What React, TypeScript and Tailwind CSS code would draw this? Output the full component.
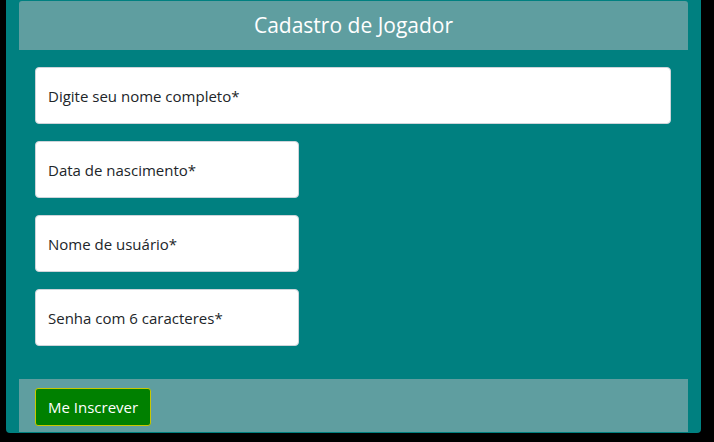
const fields = [
  { label: "Digite seu nome completo*", wide: true },
  { label: "Data de nascimento*", wide: false },
  { label: "Nome de usuário*", wide: false },
  { label: "Senha com 6 caracteres*", wide: false },
];

export default function App() {
  return (
    <div className="h-[442px] w-[714px] bg-black pl-[6px] font-['Open_Sans',sans-serif]">
      <div className="flex h-[433px] w-[695px] flex-col rounded-b-[4px] bg-[#008080] px-[13px]">
        <div className="mt-[1px] flex h-[49px] items-center justify-center rounded-t-[3px] bg-[#5f9ea0]">
          <h1 className="text-[21px] text-white">Cadastro de Jogador</h1>
        </div>

        <div className="flex flex-1 flex-col gap-[17px] px-[16px] pt-[17px]">
          {fields.map((f) => (
            <input
              key={f.label}
              type="text"
              placeholder={f.label}
              className={`h-[57px] rounded-[4px] border border-[#ced4da] bg-white px-[12px] text-[15px] text-[#212529] outline-none placeholder:text-[#212529] ${
                f.wide ? "w-[636px]" : "w-[264px]"
              }`}
            />
          ))}
        </div>

        <div className="mb-[1px] flex h-[53px] items-start bg-[#5f9ea0] px-[16px] pt-[9px]">
          <button
            type="button"
            className="h-[38px] rounded-[3px] border border-[#c8c800] bg-[#008000] px-[12px] text-[15px] text-white"
          >
            Me Inscrever
          </button>
        </div>
      </div>
    </div>
  );
}
